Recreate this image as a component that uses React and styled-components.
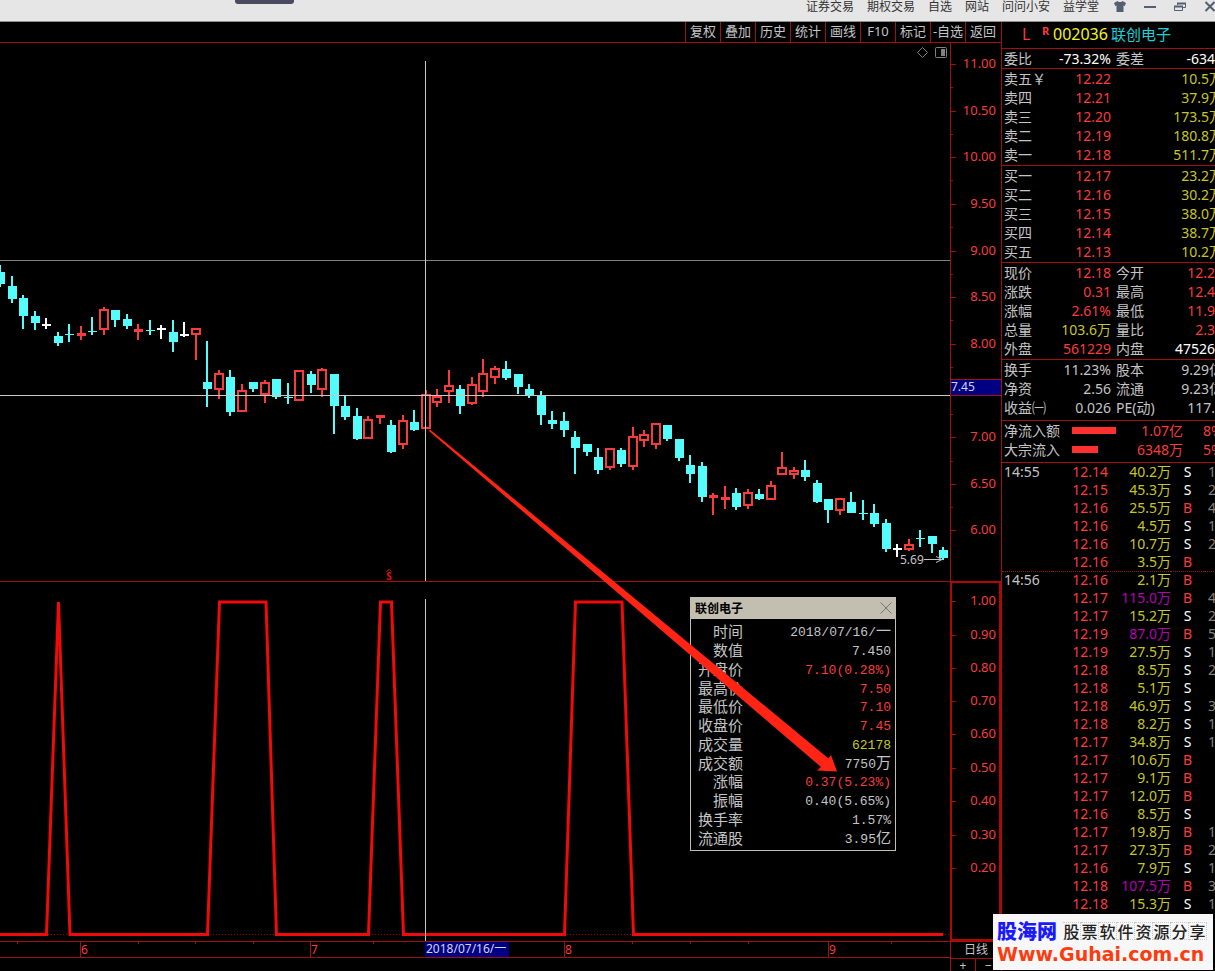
import React from 'react';
import styled, { createGlobalStyle } from 'styled-components';

const RED = '#f83c3c';
const LINE = '#a01010';
const FRAME = '#b00808';
const GRAY = '#c4c4c4';
const YELLOW = '#c6c626';
const CYAN = '#54fcfc';
const PURPLE = '#b400b4';

const GlobalStyle = createGlobalStyle`
  * {
    box-sizing: border-box;
  }

  body {
    margin: 0;
    background: #000;
    color: ${GRAY};
    font-family: "Noto Sans", "Noto Sans CJK SC", sans-serif;
    font-size: 14px;
    overflow: hidden;
  }

  button {
    border: none;
    padding: 0;
    background: none;
    color: inherit;
    font: inherit;
    cursor: pointer;
  }
`;

const Page = styled.div`
  position: relative;
  display: flex;
  flex-direction: column;
  height: 100vh;
  overflow: hidden;
`;

const TitleBar = styled.header`
  display: flex;
  align-items: flex-start;
  height: 22px;
  background: #e6e6e6;
  border-bottom: 1px solid #8c9090;
  color: #333;
  overflow: hidden;
`;

const DockTab = styled.div`
  width: 59px;
  height: 4px;
  margin-left: 235px;
  border-radius: 0 0 3px 3px;
  background: #4c4a60;
`;

const Menu = styled.nav`
  display: flex;
  gap: 13px;
  margin-left: auto;
  padding-right: 6px;

  & a {
    color: #333;
    font-size: 12px;
    line-height: 13px;
    text-decoration: none;
    white-space: nowrap;
  }
`;

const WindowButtons = styled.div`
  display: flex;
  flex-shrink: 0;
  margin-right: -10px;

  & button {
    width: 30px;
    height: 13px;
    line-height: 0;
  }
`;

const Body = styled.div`
  display: flex;
  flex: 1;
  min-height: 0;
`;

const Main = styled.main`
  display: flex;
  flex-direction: column;
  flex: 1;
  min-width: 0;
`;

const Toolbar = styled.div`
  display: flex;
  justify-content: flex-end;
  padding-right: 1px;
  height: 21px;
  flex-shrink: 0;
  border-bottom: 1px solid ${LINE};

  & button {
    width: 35px;
    padding-bottom: 2px;
    border-left: 1px solid ${LINE};
    font-size: 13px;
    line-height: 18px;
    white-space: nowrap;
  }
`;

const Charts = styled.div`
  position: relative;
  display: grid;
  grid-template-columns: 1fr 51px;
  flex-shrink: 0;

  & > svg {
    display: block;
    width: 100%;
  }
`;

const ArrowLayer = styled.svg`
  position: absolute;
  top: 0;
  left: 0;
  pointer-events: none;
`;

const Footer = styled.footer`
  display: grid;
  grid-template-columns: 1fr 51px;
  flex: 1;

  & > svg {
    display: block;
    width: 100%;
  }
`;

const PeriodBox = styled.div`
  display: grid;
  grid-template-columns: 24px 1fr;
  grid-template-rows: 17px 1fr;
  border-left: 1px solid ${LINE};
  border-top: 1px solid ${FRAME};

  & button {
    font-size: 12px;
    line-height: 14px;
  }

  & button:first-child {
    grid-column: 1 / 3;
    border-bottom: 1px solid ${LINE};
  }

  & button:last-child {
    border-left: 1px solid ${LINE};
  }
`;

const Popup = styled.section`
  position: absolute;
  top: 554px;
  left: 690px;
  width: 206px;
  border: 1px solid #c2beb0;
  background: #000;

  & table {
    width: 100%;
    height: 225px;
    margin: 3px 0;
    border-collapse: collapse;
  }

  & th {
    width: 52px;
    padding: 0;
    font-size: 15px;
    font-weight: 400;
    line-height: 16px;
    text-align: right;
    white-space: nowrap;
  }
`;

const PopupHead = styled.div`
  display: flex;
  align-items: center;
  justify-content: space-between;
  height: 21px;
  padding: 0 3px 2px 4px;
  background: #c2beb0;
  color: #000;
  font-size: 12px;
  font-weight: 700;

  & button {
    line-height: 0;
  }
`;

const PopupValue = styled.td`
  padding: 4px 4px 0 0;
  color: ${(props) => props.$color || GRAY};
  font-family: "Liberation Mono", "Noto Sans CJK SC", monospace;
  font-size: 13px;
  line-height: 14px;
  text-align: right;

  & span {
    font-size: 15px;
    line-height: 12px;
  }
`;

const Side = styled.aside`
  width: 214px;
  flex-shrink: 0;
  border-left: 1px solid ${LINE};
  overflow: hidden;
`;

const StockHead = styled.h1`
  display: flex;
  align-items: center;
  height: 26px;
  margin: 0;
  padding: 0 0 2px 20px;
  font-size: 16px;
  font-weight: 400;
  line-height: 24px;
  white-space: nowrap;
`;

const Flag = styled.span`
  color: ${RED};
  width: 20px;
`;

const SmallFlag = styled.sup`
  align-self: flex-start;
  width: 11px;
  color: ${RED};
  font-size: 11px;
  font-weight: 700;
  line-height: 18px;
`;

const Code = styled.span`
  width: 58px;
  color: #f4f41c;
`;

const Name = styled.span`
  color: #1cd0d8;
  font-size: 15px;
`;

const Section = styled.div`
  width: 228px;
  padding: 0 0 ${(props) => props.$end || 0}px 2px;
  border-top: 1px solid ${LINE};
`;

const QuoteRow = styled.div`
  display: grid;
  grid-template-columns: 50px 57px 50px 62px;
  height: 19px;
  line-height: 19px;
  white-space: nowrap;

  & > :nth-child(3) {
    padding-left: 5px;
  }
`;

// $cut keeps a column free for the last digit, which falls past the window edge
const Value = styled.span`
  padding-right: ${(props) => (props.$cut ? 8 : 0)}px;
  color: ${(props) => props.$color || GRAY};
  text-align: right;
`;

const FlowRow = styled.div`
  display: grid;
  grid-template-columns: 68px 44px 67px 20px 1fr;
  align-items: center;
  height: 19px;
  line-height: 19px;
  color: ${RED};
  white-space: nowrap;

  & > :first-child {
    color: ${GRAY};
  }
`;

const FlowBar = styled.div`
  height: 7px;
  background: #ff3030;
`;

const Trades = styled.table`
  width: 218px;
  table-layout: fixed;
  border-collapse: separate;
  border-spacing: 0;
  border-top: 1px solid ${LINE};

  & td {
    height: 18px;
    padding: 0;
    line-height: 18px;
    text-align: right;
    white-space: nowrap;
  }

  & td:first-child {
    padding-left: 2px;
    text-align: left;
  }
`;

const TradeRow = styled.tr`
  && td {
    border-top: ${(props) => (props.$minute ? `1px dotted ${LINE}` : 'none')};
    padding-bottom: ${(props) => (props.$minute ? 1 : 0)}px;
    line-height: ${(props) => (props.$minute ? 16 : 18)}px;
  }
`;

const Cell = styled.td`
  color: ${(props) => props.$color};
`;

const SideCell = styled(Cell)`
  && {
    text-align: center;
  }
`;

const Watermark = styled.div`
  position: absolute;
  right: 2px;
  bottom: 1px;
  width: 220px;
  height: 56px;
  padding: 5px 4px 0;
  background: rgba(255, 255, 255, 0.97);
  overflow: hidden;
`;

const MarkTop = styled.div`
  display: flex;
  align-items: center;
  justify-content: space-between;
  height: 24px;
`;

const MarkLogo = styled.strong`
  color: #1a1aff;
  font-family: "Noto Sans CJK SC", sans-serif;
  font-size: 20px;
  font-weight: 900;
  line-height: 24px;
`;

const MarkSlogan = styled.span`
  display: flex;
  margin-right: 2px;

  & span {
    width: 18px;
    height: 18px;
    border: 1px dotted #c8c8c8;
    border-left: none;
    color: #222;
    font-family: "Noto Sans CJK SC", sans-serif;
    font-size: 16px;
    font-weight: 500;
    line-height: 16px;
    text-align: center;
  }
`;

const MarkLink = styled.a`
  display: block;
  color: #fb3c10;
  font-family: "DejaVu Sans", sans-serif;
  font-size: 19px;
  font-weight: 700;
  line-height: 22px;
  text-decoration: none;
  white-space: nowrap;
`;

// type, body top, body bottom, high, low (c = down, r = up, w = flat)
const candles = [
  ['c', 272, 284, 265, 287], ['c', 286, 299, 276, 303], ['c', 298, 316, 295, 329],
  ['c', 316, 323, 311, 330], ['w', 324, 326, 318, 329], ['c', 336, 343, 332, 346],
  ['c', 334, 335, 324, 342], ['r', 333, 336, 326, 340], ['c', 331, 332, 317, 335],
  ['r', 309, 330, 307, 335], ['c', 310, 320, 310, 327], ['c', 319, 326, 314, 329],
  ['r', 329, 332, 324, 340], ['c', 330, 331, 320, 335], ['w', 328, 330, 325, 339],
  ['c', 332, 342, 320, 352], ['w', 334, 336, 322, 337], ['r', 328, 335, 328, 360],
  ['c', 382, 389, 341, 407], ['r', 373, 390, 370, 399], ['c', 377, 412, 370, 416],
  ['r', 390, 412, 384, 412], ['c', 382, 389, 382, 392], ['r', 382, 395, 380, 403],
  ['c', 379, 397, 379, 399], ['c', 397, 398, 383, 404], ['r', 370, 401, 370, 401],
  ['c', 374, 385, 371, 393], ['r', 369, 390, 368, 397], ['c', 374, 406, 374, 434],
  ['c', 406, 417, 396, 420], ['c', 416, 439, 408, 440], ['r', 419, 439, 416, 439],
  ['r', 415, 418, 415, 424], ['c', 425, 452, 420, 453], ['r', 420, 445, 415, 449],
  ['c', 422, 430, 410, 431], ['r', 394, 429, 390, 429], ['r', 396, 403, 389, 407],
  ['r', 385, 392, 370, 403], ['c', 389, 406, 385, 414], ['r', 384, 404, 377, 405],
  ['r', 373, 392, 359, 397], ['r', 368, 378, 366, 384], ['c', 369, 378, 361, 380],
  ['c', 374, 387, 374, 394], ['c', 389, 395, 384, 398], ['c', 396, 415, 391, 425],
  ['c', 420, 424, 411, 429], ['c', 421, 430, 412, 437], ['c', 437, 448, 431, 474],
  ['c', 444, 452, 444, 456], ['c', 457, 470, 448, 474], ['r', 448, 468, 448, 470],
  ['c', 450, 464, 448, 467], ['r', 436, 467, 427, 470], ['r', 434, 441, 430, 447],
  ['r', 423, 445, 423, 449], ['c', 425, 439, 425, 441], ['c', 439, 458, 439, 461],
  ['c', 465, 474, 455, 483], ['c', 466, 497, 462, 502], ['r', 495, 498, 493, 515],
  ['r', 497, 500, 486, 509], ['c', 493, 507, 488, 510], ['r', 492, 506, 489, 509],
  ['c', 494, 499, 489, 500], ['r', 485, 500, 481, 500], ['r', 467, 475, 452, 475],
  ['r', 470, 475, 467, 479], ['c', 470, 477, 460, 481], ['c', 483, 502, 480, 503],
  ['c', 499, 510, 499, 523], ['r', 498, 511, 498, 515], ['c', 502, 513, 492, 513],
  ['c', 513, 514, 500, 520], ['c', 513, 524, 504, 527], ['c', 523, 549, 519, 552],
  ['w', 548, 550, 544, 557], ['r', 544, 550, 539, 551], ['c', 538, 539, 530, 547],
  ['c', 536, 544, 536, 553], ['c', 550, 558, 547, 560],
];

const colors = { c: CYAN, r: RED, w: '#ffffff' };

const priceTicks = [
  [64, '11.00'], [111, '10.50'], [157, '10.00'], [204, '9.50'], [251, '9.00'], [297, '8.50'],
  [344, '8.00'], [437, '7.00'], [484, '6.50'], [530, '6.00'],
];
const minorTicks = [87, 134, 180, 227, 274, 320, 367, 414, 461, 507];

const signalTicks = [
  [601, '1.00'], [635, '0.90'], [668, '0.80'], [701, '0.70'], [734, '0.60'],
  [768, '0.50'], [801, '0.40'], [835, '0.30'], [868, '0.20'],
];

const months = [[80, '6'], [310, '7'], [564, '8'], [828, '9']];
const weekTicks = [17, 138, 195, 253, 373, 483, 632, 690, 748, 891];

const signalLine = '0,934.5 46.5,934.5 58.5,602 70,934.5 207.5,934.5 219.5,602 266,602 276.5,934.5 368.5,934.5 380.5,602 391.5,602 403.5,934.5 564.5,934.5 575.5,602 622,602 633.5,934.5 943,934.5';

const toolbar = ['复权', '叠加', '历史', '统计', '画线', 'F10', '标记', '-自选', '返回'];
const menu = ['证券交易', '期权交易', '自选', '网站', '问问小安', '益学堂'];

const sells = [['卖五￥', '12.22', '10.5万'], ['卖四', '12.21', '37.9万'], ['卖三', '12.20', '173.5万'], ['卖二', '12.19', '180.8万'], ['卖一', '12.18', '511.7万']];
const buys = [['买一', '12.17', '23.2万'], ['买二', '12.16', '30.2万'], ['买三', '12.15', '38.0万'], ['买四', '12.14', '38.7万'], ['买五', '12.13', '10.2万']];

const quotes = [
  ['现价', '12.18', RED, '今开', '12.2', RED, true],
  ['涨跌', '0.31', RED, '最高', '12.4', RED, true],
  ['涨幅', '2.61%', RED, '最低', '11.9', RED, true],
  ['总量', '103.6万', YELLOW, '量比', '2.3', RED, true],
  ['外盘', '561229', RED, '内盘', '47526', '#fff', true],
];

const basics = [
  ['换手', '11.23%', GRAY, '股本', '9.29亿', GRAY, false],
  ['净资', '2.56', GRAY, '流通', '9.23亿', GRAY, false],
  ['收益㈠', '0.026', GRAY, 'PE(动)', '117.', GRAY, true],
];

const flows = [['净流入额', 44, '1.07亿', '8%'], ['大宗流入', 26, '6348万', '5%']];

const trades = [
  ['14:55', '12.14', '40.2', 'S', '1'], ['', '12.15', '45.3', 'S', '2'], ['', '12.16', '25.5', 'B', '4'],
  ['', '12.16', '4.5', 'S', '1'], ['', '12.16', '10.7', 'S', '2'], ['', '12.16', '3.5', 'B', ''],
  ['14:56', '12.16', '2.1', 'B', ''], ['', '12.17', '115.0', 'B', '4'], ['', '12.17', '15.2', 'S', '2'],
  ['', '12.19', '87.0', 'B', '5'], ['', '12.19', '27.5', 'S', '1'], ['', '12.18', '8.5', 'S', '2'],
  ['', '12.18', '5.1', 'S', ''], ['', '12.18', '46.9', 'S', '3'], ['', '12.18', '8.2', 'S', '1'],
  ['', '12.17', '34.8', 'S', '1'], ['', '12.17', '10.6', 'B', ''], ['', '12.17', '9.1', 'B', ''],
  ['', '12.17', '12.0', 'B', ''], ['', '12.16', '8.5', 'S', ''], ['', '12.17', '19.8', 'B', '1'],
  ['', '12.17', '27.3', 'B', '2'], ['', '12.16', '7.9', 'S', '1'], ['', '12.18', '107.5', 'B', '3'],
  ['', '12.18', '15.3', 'S', '1'],
];

const details = [
  ['时间', '2018/07/16/', '一'], ['数值', '7.450'], ['开盘价', '7.10(0.28%)', '', RED],
  ['最高价', '7.50', '', RED], ['最低价', '7.10', '', RED], ['收盘价', '7.45', '', RED],
  ['成交量', '62178', '', YELLOW], ['成交额', '7750', '万'], ['涨幅', '0.37(5.23%)', '', RED],
  ['振幅', '0.40(5.65%)'], ['换手率', '1.57%'], ['流通股', '3.95', '亿'],
];

function Candle({ index, data }) {
	const [type, top, bottom, high, low] = data;
	const x = Math.round(0.4 + index * 11.5);
	const color = colors[type];
	const hollow = type === 'r' && bottom - top > 4;

	return (
		<g fill={color}>
			{high < top && <rect x={x - 1} y={high} width="2" height={top - high} />}
			{low > bottom && <rect x={x - 1} y={bottom} width="2" height={low - bottom} />}
			{hollow ? (
				<rect x={x - 4} y={top + 1} width="8" height={bottom - top - 2} fill="none" stroke={color} strokeWidth="2" />
			) : (
				<rect x={x - 4} y={top} width="9" height={bottom - top} />
			)}
		</g>
	);
}

function PriceChart() {
	return (
		<svg viewBox="0 43 950 539" shapeRendering="crispEdges">
			<rect x="0" y="260" width="950" height="1" fill="#808080" />
			{candles.map((data, index) => (
				<Candle key={index} index={index} data={data} />
			))}
			<rect x="0" y="395" width="950" height="1" fill="#c8c8c0" />
			<rect x="425" y="61" width="1" height="520" fill="#c8c8c0" />
			<rect x="0" y="581" width="950" height="1" fill={LINE} />
			<text x="389" y="580" fill="#e01010" fontSize="10" fontWeight="700" textAnchor="middle">S</text>
			<path d="M386.5 571.5 389 569.5 391.5 571.5" fill="none" stroke="#e01010" shapeRendering="auto" />
			<text x="900" y="564" fill={GRAY} fontSize="12">5.69</text>
			<path d="M924 559.5H942M936 556.5 942 559.5 936 562.5" fill="none" stroke={GRAY} shapeRendering="auto" />
			<path d="M922.5 47.5 927.5 52.5 922.5 57.5 917.5 52.5Z" fill="none" stroke="#808080" shapeRendering="auto" />
			<rect x="935.5" y="47.5" width="11" height="10" rx="1" fill="none" stroke="#808080" shapeRendering="auto" />
			<rect x="941" y="49" width="4" height="7" fill="#808080" />
		</svg>
	);
}

function PriceAxis() {
	return (
		<svg viewBox="950 43 51 539" shapeRendering="crispEdges">
			<rect x="950" y="43" width="1" height="539" fill={LINE} />
			<rect x="950" y="581" width="51" height="1" fill={FRAME} />
			{minorTicks.map((y) => (
				<rect key={y} x="950" y={y} width="3" height="1" fill={LINE} />
			))}
			{priceTicks.map(([y, label]) => (
				<g key={y}>
					<rect x="950" y={y} width="6" height="1" fill={LINE} />
					<text x="996" y={y + 4} fill={RED} fontSize="13" textAnchor="end">{label}</text>
				</g>
			))}
			<rect x="951" y="379" width="50" height="17" fill={LINE} />
			<rect x="951" y="380" width="50" height="15" fill="#000084" />
			<text x="951" y="391" fill="#d4d4e4" fontSize="12">7.45</text>
		</svg>
	);
}

function SignalChart() {
	return (
		<svg viewBox="0 582 950 359" shapeRendering="crispEdges">
			<path d="M0 934.5H950" stroke="#900" strokeDasharray="1 2" />
			<polyline points={signalLine} fill="none" stroke="#f00a0a" strokeWidth="3" shapeRendering="auto" />
			<rect x="425" y="599" width="1" height="342" fill="#c8c8c0" />
		</svg>
	);
}

function SignalAxis() {
	return (
		<svg viewBox="950 582 51 359" shapeRendering="crispEdges">
			<rect x="951" y="582" width="49" height="358" fill="none" stroke={FRAME} strokeWidth="2" />
			{signalTicks.map(([y, label]) => (
				<g key={y}>
					<rect x="952" y={y} width="4" height="1" fill={LINE} />
					<text x="996" y={y + 4} fill={RED} fontSize="13" textAnchor="end">{label}</text>
				</g>
			))}
		</svg>
	);
}

function TimeAxis() {
	return (
		<svg viewBox="0 941 950 30" shapeRendering="crispEdges">
			<rect x="0" y="941" width="950" height="1" fill={LINE} />
			<rect x="0" y="957" width="950" height="1" fill={LINE} />
			{weekTicks.map((x) => (
				<rect key={x} x={x} y="941" width="1" height="3" fill={LINE} />
			))}
			{months.map(([x, label]) => (
				<g key={x}>
					<rect x={x} y="941" width="1" height="16" fill={LINE} />
					<text x={x + 1} y="954" fill={RED} fontSize="12">{label}</text>
				</g>
			))}
			<rect x="425" y="942" width="84" height="15" fill="#000084" />
			<text x="426" y="953" fill="#d4d4e4" fontSize="12">2018/07/16/一</text>
		</svg>
	);
}

function DetailPopup() {
	return (
		<Popup>
			<PopupHead>
				联创电子
				<button aria-label="关闭">
					<svg width="12" height="12" viewBox="0 0 12 12">
						<path d="M0.5 0.5 11.5 11.5M11.5 0.5 0.5 11.5" stroke="#77756c" />
					</svg>
				</button>
			</PopupHead>
			<table>
				<tbody>
					{details.map(([label, value, unit, color]) => (
						<tr key={label}>
							<th scope="row">{label}</th>
							<PopupValue $color={color}>{value}{unit && <span>{unit}</span>}</PopupValue>
						</tr>
					))}
				</tbody>
			</table>
		</Popup>
	);
}

function Quote({ data }) {
	const [label, value, color, label2, value2, color2, cut] = data;

	return (
		<QuoteRow>
			<span>{label}</span>
			<Value $color={color}>{value}</Value>
			<span>{label2}</span>
			<Value $color={color2} $cut={cut}>{value2}</Value>
		</QuoteRow>
	);
}

function SidePanel() {
	return (
		<Side>
			<StockHead>
				<Flag>L</Flag>
				<SmallFlag>R</SmallFlag>
				<Code>002036</Code>
				<Name>联创电子</Name>
			</StockHead>
			<Section>
				<Quote data={['委比', '-73.32%', '#fff', '委差', '-634', '#fff', true]} />
			</Section>
			{[sells, buys].map((orders) => (
				<Section key={orders[0][0]} $end={1}>
					{orders.map(([label, price, amount]) => (
						<Quote key={label} data={[label, price, RED, '', amount, YELLOW, false]} />
					))}
				</Section>
			))}
			<Section $end={1}>
				{quotes.map((data) => <Quote key={data[0]} data={data} />)}
			</Section>
			<Section $end={3}>
				{basics.map((data) => <Quote key={data[0]} data={data} />)}
			</Section>
			<Section $end={3}>
				{flows.map(([label, width, value, percent]) => (
					<FlowRow key={label}>
						<span>{label}</span>
						<FlowBar style={{ width }} />
						<Value $color={RED}>{value}</Value>
						<span />
						<span>{percent}</span>
					</FlowRow>
				))}
			</Section>
			<Trades>
				<colgroup>
					<col width="50" />
					<col width="56" />
					<col width="63" />
					<col width="33" />
					<col />
				</colgroup>
				<tbody>
					{trades.map(([time, price, amount, side, count], index) => (
						<TradeRow key={index} $minute={index > 0 && time !== ''}>
							<td>{time}</td>
							<Cell $color={RED}>{price}</Cell>
							<Cell $color={Number(amount) > 80 ? PURPLE : YELLOW}>{amount}万</Cell>
							<SideCell $color={side === 'B' ? RED : '#fff'}>{side}</SideCell>
							<SideCell $color="#808080">{count}</SideCell>
						</TradeRow>
					))}
				</tbody>
			</Trades>
		</Side>
	);
}

function App() {
	return (
		<Page>
			<GlobalStyle />
			<TitleBar>
				<DockTab />
				<Menu>
					{menu.map((item) => <a key={item} href="#">{item}</a>)}
				</Menu>
				<WindowButtons>
					<button aria-label="换肤">
						<svg width="12" height="11" viewBox="0 0 12 11">
							<path d="M3.5 0C4.5 1.4 7.5 1.4 8.5 0L12 2 10.8 5 9.5 4.5V11H2.5V4.5L1.2 5 0 2Z" fill="#536072" />
						</svg>
					</button>
					<button aria-label="最小化">
						<svg width="12" height="11" viewBox="0 0 12 11">
							<path d="M0 6H12" stroke="#536072" strokeWidth="2" />
						</svg>
					</button>
					<button aria-label="还原">
						<svg width="12" height="11" viewBox="0 0 12 11">
							<path d="M3.5 4V2.5H11.5V6.5H9M0.5 5.5H8.5V9.5H0.5Z" fill="none" stroke="#536072" />
							<path d="M3 2.5H12M0 5.5H9" stroke="#536072" strokeWidth="2" />
						</svg>
					</button>
					<button aria-label="关闭窗口">
						<svg width="12" height="11" viewBox="0 0 12 11">
							<path d="M1.5 1 10.5 10M10.5 1 1.5 10" stroke="#536072" strokeWidth="2" />
						</svg>
					</button>
				</WindowButtons>
			</TitleBar>
			<Body>
				<Main>
					<Toolbar>
						{toolbar.map((item) => <button key={item}>{item}</button>)}
					</Toolbar>
					<Charts>
						<PriceChart />
						<PriceAxis />
						<SignalChart />
						<SignalAxis />
						<DetailPopup />
						<ArrowLayer viewBox="0 43 1001 898">
							<path d="M429 431 430 429.500 828.500 758.500 831 755 837 771.500 817 770.500 821 767Z" fill="#ff2414" />
						</ArrowLayer>
					</Charts>
					<Footer>
						<TimeAxis />
						<PeriodBox>
							<button>日线</button>
							<button aria-label="放大">+</button>
							<button aria-label="缩小">−</button>
						</PeriodBox>
					</Footer>
				</Main>
				<SidePanel />
			</Body>
			<Watermark>
				<MarkTop>
					<MarkLogo>股海网</MarkLogo>
					<MarkSlogan>
						{[...'股票软件资源分享'].map((char, index) => <span key={index}>{char}</span>)}
					</MarkSlogan>
				</MarkTop>
				<MarkLink href="#">Www.Guhai.com.cn</MarkLink>
			</Watermark>
		</Page>
	);
}

export default App;
